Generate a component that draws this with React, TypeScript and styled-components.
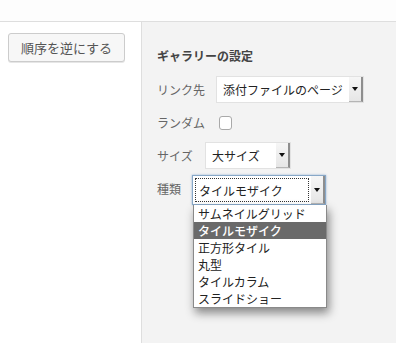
import React from "react";
import styled, { createGlobalStyle } from "styled-components";

const Global = createGlobalStyle`
  html, body { margin: 0; padding: 0; background: #ffffff; }
  body { font-family: "Noto Sans CJK JP", "Noto Sans", sans-serif; -webkit-font-smoothing: antialiased; }
  * { box-sizing: border-box; }
`;

const Page = styled.div`
  display: flex;
  flex-direction: column;
  height: 343px;
  overflow: hidden;
`;

const TopBar = styled.div`
  height: 22px;
  flex: none;
  background: #fdfdfd;
  border-bottom: 1px solid #dedede;
`;

const Body = styled.div`
  flex: 1;
  display: flex;
`;

const Sidebar = styled.div`
  width: 142px;
  flex: none;
  background: #ffffff;
  padding: 11px 0 0 8px;
  border-right: 1px solid #dedede;
`;

const Button = styled.button`
  width: 117px;
  height: 29px;
  font-family: inherit;
  font-size: 13px;
  color: #555;
  background: #f7f7f7;
  border: 1px solid #cccccc;
  border-radius: 3px;
  box-shadow: 0 1px 0 #e6e6e6;
  padding: 0;
  line-height: 27px;
`;

const Panel = styled.div`
  flex: 1;
  background: #f3f3f3;
  padding: 20px 0 0 15px;
`;

const Heading = styled.div`
  height: 27px;
  line-height: 27px;
  font-size: 12px;
  font-weight: bold;
  color: #444;
  margin-bottom: 7px;
`;

const Row = styled.div`
  display: flex;
  align-items: center;
  gap: 11px;
  height: 27px;
  margin-bottom: 6px;
`;

const Label = styled.span<{ $minWidth?: number }>`
  font-size: 12px;
  color: #666;
  min-width: ${(p) => (p.$minWidth ? `${p.$minWidth}px` : "auto")};
`;

const SelectBox = styled.div<{ $width: number; $focused?: boolean }>`
  position: relative;
  width: ${(p) => p.$width}px;
  height: ${(p) => (p.$focused ? 30 : 27)}px;
  margin-top: ${(p) => (p.$focused ? 3 : 0)}px;
  display: flex;
  background: #ffffff;
  border: 1px solid ${(p) => (p.$focused ? "#88a8c8" : "#e2e2e2")};
  box-shadow: ${(p) => (p.$focused ? "0 0 2px rgba(80,130,190,0.6)" : "none")};
`;

const SelectText = styled.div<{ $focused?: boolean }>`
  flex: 1;
  margin: ${(p) => (p.$focused ? "2px" : "0")};
  padding-left: ${(p) => (p.$focused ? 3 : 6)}px;
  border: ${(p) => (p.$focused ? "1px dotted #333" : "none")};
  font-size: 12px;
  color: #222;
  display: flex;
  align-items: center;
  white-space: nowrap;
`;

const Arrow = styled.div`
  width: 14px;
  flex: none;
  background: linear-gradient(#f6f6f6, #e6e6e6);
  border-right: 2px solid #8e8e8e;
  border-bottom: 1px solid #b5b5b5;
  display: flex;
  align-items: center;
  justify-content: center;
  &::after {
    content: "";
    border-left: 3px solid transparent;
    border-right: 3px solid transparent;
    border-top: 4px solid #111;
  }
`;

const Checkbox = styled.div`
  width: 13px;
  height: 14px;
  margin-left: 3px;
  background: #fff;
  border: 1px solid #a9a9a9;
  border-radius: 3px;
`;

const Dropdown = styled.ul`
  position: absolute;
  top: 29px;
  left: 0;
  width: 134px;
  margin: 0;
  padding: 0;
  list-style: none;
  background: #fff;
  border: 1px solid #8a8a8a;
  border-top: none;
  box-shadow: 2px 5px 9px rgba(0, 0, 0, 0.45);
  z-index: 2;
`;

const Option = styled.li<{ $active?: boolean }>`
  height: 17px;
  line-height: 17px;
  padding-left: 4px;
  font-size: 12px;
  color: ${(p) => (p.$active ? "#fff" : "#222")};
  background: ${(p) => (p.$active ? "#6a6a6a" : "transparent")};
  font-weight: ${(p) => (p.$active ? 500 : 400)};
  white-space: nowrap;
`;

const options = ["サムネイルグリッド", "タイルモザイク", "正方形タイル", "丸型", "タイルカラム", "スライドショー"];

export default function App() {
  return (
    <>
      <Global />
      <Page>
        <TopBar />
        <Body>
          <Sidebar>
            <Button>順序を逆にする</Button>
          </Sidebar>
          <Panel>
            <Heading>ギャラリーの設定</Heading>
            <Row>
              <Label>リンク先</Label>
              <SelectBox $width={148}>
                <SelectText>添付ファイルのページ</SelectText>
                <Arrow />
              </SelectBox>
            </Row>
            <Row>
              <Label>ランダム</Label>
              <Checkbox />
            </Row>
            <Row>
              <Label $minWidth={37}>サイズ</Label>
              <SelectBox $width={86}>
                <SelectText>大サイズ</SelectText>
                <Arrow />
              </SelectBox>
            </Row>
            <Row>
              <Label>種類</Label>
              <SelectBox $width={134} $focused>
                <SelectText $focused>タイルモザイク</SelectText>
                <Arrow />
                <Dropdown>
                  {options.map((o) => (
                    <Option key={o} $active={o === "タイルモザイク"}>
                      {o}
                    </Option>
                  ))}
                </Dropdown>
              </SelectBox>
            </Row>
          </Panel>
        </Body>
      </Page>
    </>
  );
}
